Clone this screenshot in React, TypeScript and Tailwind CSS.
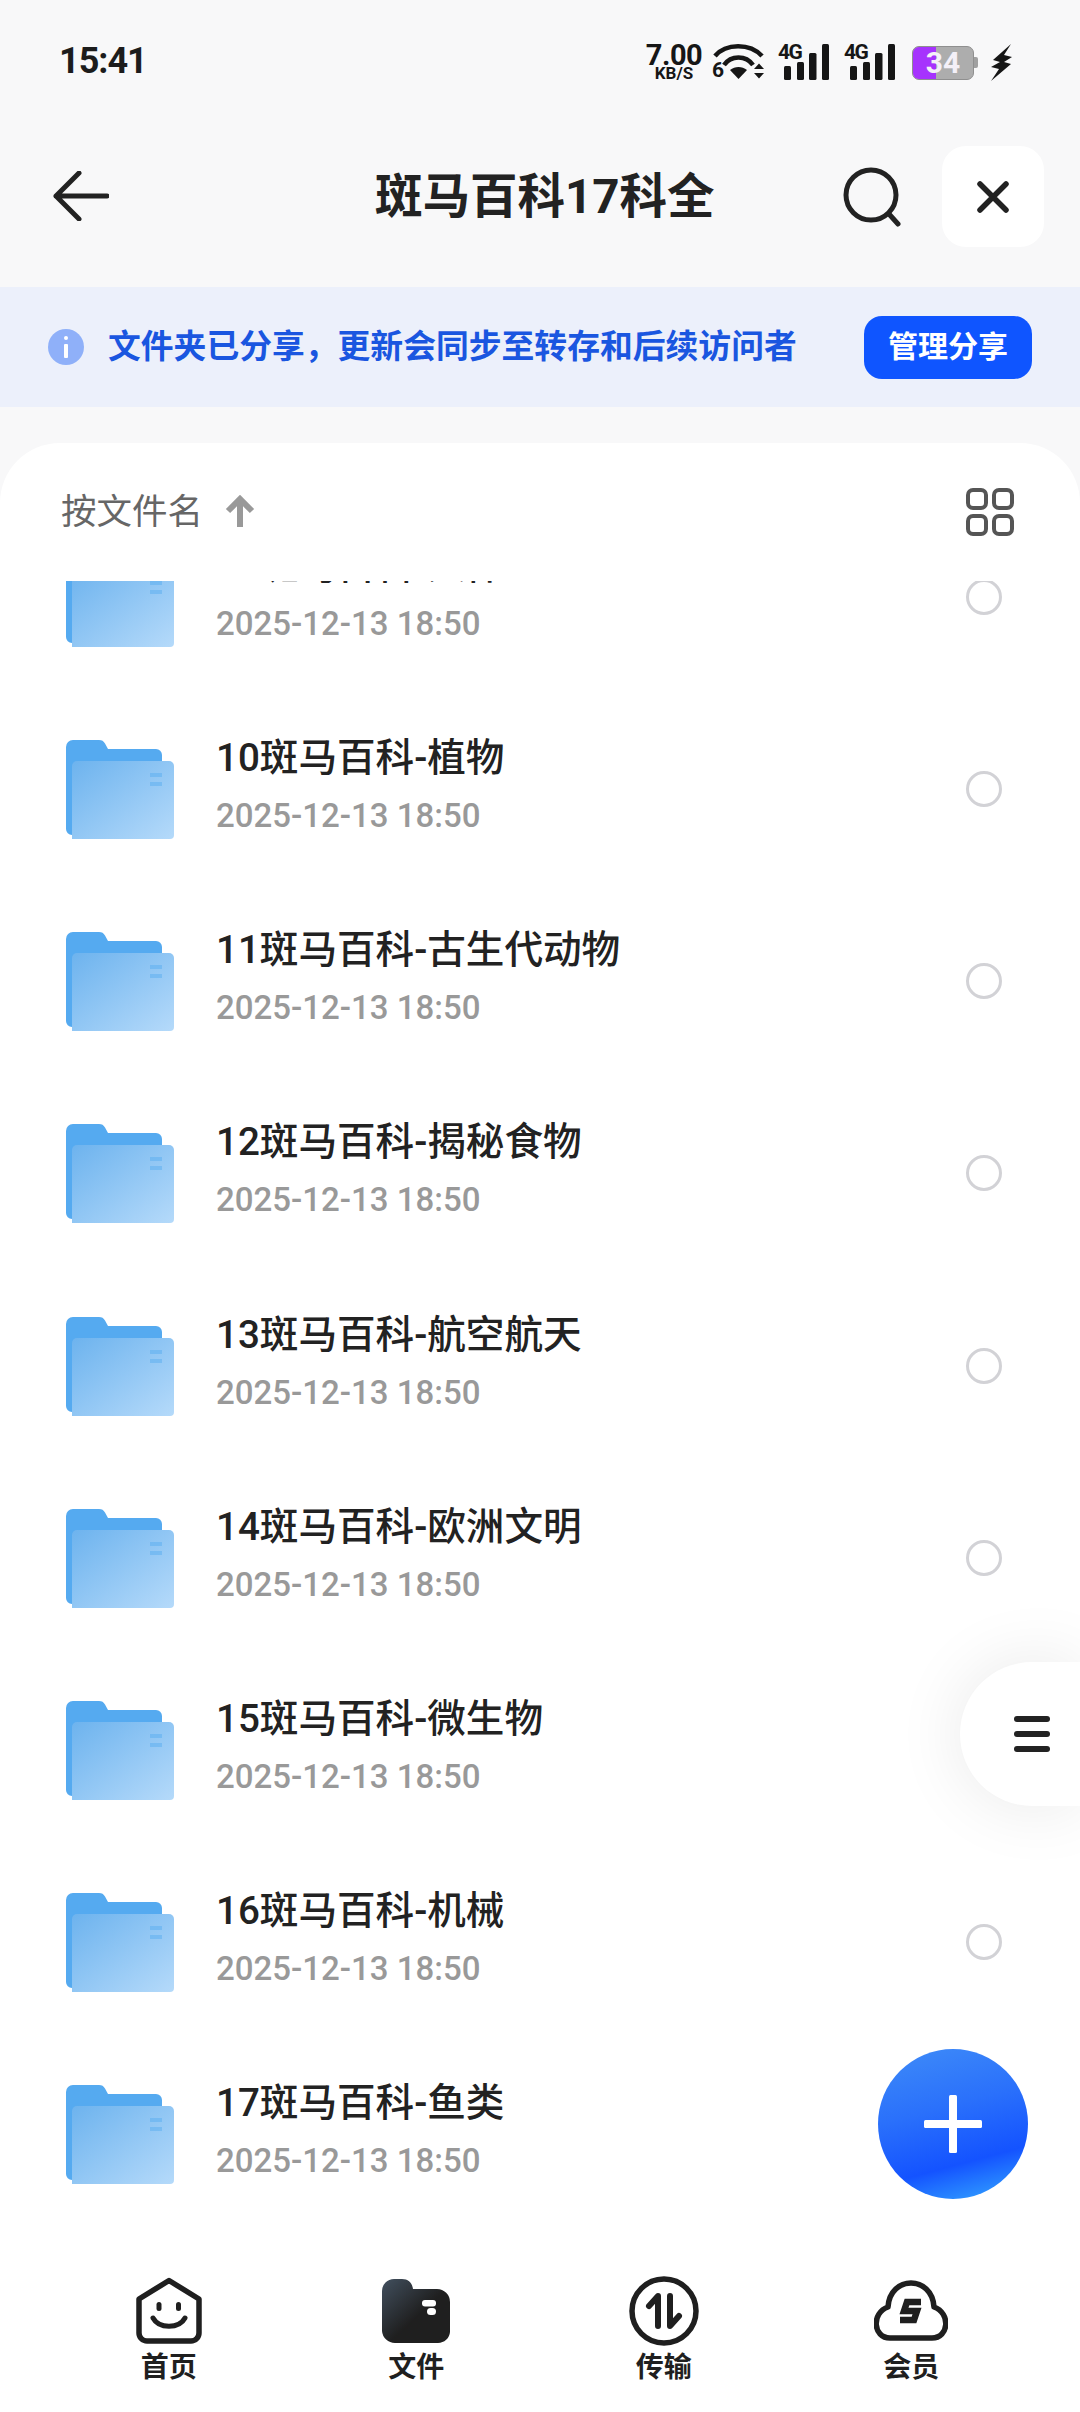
import React from "react";

const names = [
  "09斑马百科-人体",
  "10斑马百科-植物",
  "11斑马百科-古生代动物",
  "12斑马百科-揭秘食物",
  "13斑马百科-航空航天",
  "14斑马百科-欧洲文明",
  "15斑马百科-微生物",
  "16斑马百科-机械",
  "17斑马百科-鱼类",
];

function Folder({ id }: { id: number }) {
  return (
    <svg width="108" height="100" viewBox="0 0 108 100" className="shrink-0">
      <defs>
        <linearGradient id={`f${id}`} x1="0" y1="0" x2="1" y2="1">
          <stop offset="0" stopColor="#6db3ee" />
          <stop offset="1" stopColor="#b5dafa" />
        </linearGradient>
      </defs>
      <path d="M0 7a7 7 0 0 1 7-7h26c3 0 4.500 1 6 3.500L42 9h48a6 6 0 0 1 6 6v80H6a6 6 0 0 1-6-6Z" fill="#55aaf0" />
      <path d="M6 26a5 5 0 0 1 5-5h92a5 5 0 0 1 5 5v69a4 4 0 0 1-4 4H6Z" fill={`url(#f${id})`} />
      <rect x="84" y="33" width="12" height="4" fill="#55aaf0" opacity="0.45" />
      <rect x="84" y="42" width="12" height="4" fill="#55aaf0" opacity="0.45" />
    </svg>
  );
}

function Signal() {
  return (
    <div className="relative w-[52px] h-[36px]">
      <svg width="52" height="36" viewBox="0 0 52 36" className="absolute left-0 top-0">
        <rect x="6" y="22" width="7" height="14" rx="1.500" fill="#161616" />
        <rect x="19" y="18" width="7" height="18" rx="1.500" fill="#161616" />
        <rect x="31" y="9" width="7.500" height="27" rx="1.500" fill="#161616" />
        <rect x="44" y="0" width="7" height="36" rx="1.500" fill="#161616" />
      </svg>
      <span className="absolute left-0 top-[-4px] w-[24px] text-[21px] leading-[24px] font-bold text-[#161616] tracking-[-1.500px] whitespace-nowrap">4G</span>
    </div>
  );
}

function StatusBar() {
  return (
    <div className="h-[146px] shrink-0 pl-[59px] pr-[68px] flex items-start justify-between">
      <span className="mt-[40px] text-[36px] leading-[42px] font-bold text-[#1c1c1c] tracking-[-1px]">15:41</span>
      <div className="mt-[44px] flex items-start">
        <div className="w-[58px] flex flex-col items-center text-[#161616] font-bold">
          <span className="text-[29px] leading-[22px] tracking-[-0.5px]">7.00</span>
          <span className="text-[17px] leading-[14px]">KB/S</span>
        </div>
        <div className="relative w-[52px] h-[37px] ml-[10px]">
          <svg width="52" height="37" viewBox="0 0 52 37" className="absolute left-0 top-0">
            <path d="M2 12C13 -1 37 -1 49 12" stroke="#161616" strokeWidth="4.500" fill="none" />
            <path d="M11 21C18 11 33 11 40 21" stroke="#161616" strokeWidth="4.500" fill="none" />
            <path d="M17 26c5-4 12-4 17 0l-8.500 9Z" fill="#161616" />
            <path d="M41 25h10l-5-5.500ZM41 29h10l-5 5.500Z" fill="#161616" />
          </svg>
          <span className="absolute left-[-1px] top-[14px] text-[21px] leading-[24px] font-bold text-[#161616]">6</span>
        </div>
        <div className="ml-[13px]"><Signal /></div>
        <div className="ml-[14px]"><Signal /></div>
        <div className="relative ml-[16px] mt-[2px] w-[62px] h-[34px] rounded-[7px] bg-[#adadad] border border-[#8f8f8f] overflow-hidden flex items-center justify-center">
          <div className="absolute left-0 top-0 bottom-0 w-[23px] bg-[#a633fd]" />
          <span className="relative text-[30px] leading-[34px] font-bold text-[#f4f0f8]">34</span>
        </div>
        <div className="mt-[13px] w-[4px] h-[11px] rounded-r-[2px] bg-[#a0a0a0]" />
        <svg width="22" height="37" viewBox="0 0 22 37" className="ml-[12px]">
          <path d="M21 0 3 16l7 2-9 5 8 2-8 12 20-17-7-2 8-5-8-2 7-11Z" fill="#161616" />
        </svg>
      </div>
    </div>
  );
}

function Header() {
  return (
    <div className="relative h-[101px] shrink-0 flex items-center justify-between pl-[53px] pr-[36px]">
      <svg width="56" height="50" viewBox="0 0 56 50" className="mt-[-2px]">
        <path d="M26 2 3 25l23 23M3 25h51" stroke="#222" strokeWidth="5" strokeLinecap="round" strokeLinejoin="round" fill="none" />
      </svg>
      <span className="absolute left-[375px] top-[26px] text-[47.500px] leading-[50px] font-bold text-[#222]">斑马百科17科全</span>
      <div className="flex items-center">
        <svg width="60" height="60" viewBox="0 0 60 60" className="mr-[40px]">
          <circle cx="29" cy="28" r="25" stroke="#222" strokeWidth="5" fill="none" />
          <path d="m47 47 9 10" stroke="#222" strokeWidth="5" strokeLinecap="round" />
        </svg>
        <div className="w-[102px] h-[101px] rounded-[24px] bg-white flex items-center justify-center">
          <svg width="34" height="34" viewBox="0 0 34 34">
            <path d="M4 4 30 30M30 4 4 30" stroke="#222" strokeWidth="5.500" strokeLinecap="round" />
          </svg>
        </div>
      </div>
    </div>
  );
}

function Banner() {
  return (
    <div className="mt-[40px] h-[120px] shrink-0 bg-[#ecf0fb] flex items-center pl-[48px] pr-[48px]">
      <div className="w-[36px] h-[36px] rounded-full bg-[#8fb0f9] flex items-center justify-center shrink-0">
        <svg width="6" height="22" viewBox="0 0 6 22">
          <rect x="1" y="0" width="4" height="4" rx="2" fill="#fff" />
          <rect x="1" y="8" width="4" height="14" rx="1" fill="#fff" />
        </svg>
      </div>
      <span className="ml-[24px] text-[32.800px] leading-[40px] font-bold text-[#1a56e0] whitespace-nowrap">文件夹已分享，更新会同步至转存和后续访问者</span>
      <div className="ml-auto w-[168px] h-[63px] rounded-[18px] bg-[#0f55ff] flex items-center justify-center text-[30px] leading-[36px] font-bold text-white">管理分享</div>
    </div>
  );
}

function SortRow() {
  return (
    <div className="h-[138px] shrink-0 pl-[61px] pr-[66px] flex items-center justify-between">
      <div className="flex items-center">
        <span className="text-[35.500px] leading-[42px] text-[#666]">按文件名</span>
        <svg width="32" height="34" viewBox="0 0 32 34" className="ml-[21px]">
          <path d="M16 32V5M4 16 16 4l12 12" stroke="#999" strokeWidth="6" fill="none" />
        </svg>
      </div>
      <svg width="48" height="48" viewBox="0 0 48 48">
        <g stroke="#555" strokeWidth="4" fill="none">
          <rect x="2" y="2" width="18" height="18" rx="5" />
          <rect x="28" y="2" width="18" height="18" rx="5" />
          <rect x="2" y="28" width="18" height="18" rx="5" />
          <rect x="28" y="28" width="18" height="18" rx="5" />
        </g>
      </svg>
    </div>
  );
}

function Row({ name, i, last }: { name: string; i: number; last: boolean }) {
  return (
    <div className="h-[192.140px] shrink-0 pl-[66px] pr-[78px] flex items-center">
      <Folder id={i} />
      <div className="ml-[42px] flex flex-col mt-[-9px]">
        <span className="text-[38.600px] leading-[46px] text-[#222] font-medium whitespace-nowrap">{name}</span>
        <span className="mt-[15px] text-[33px] leading-[40px] font-medium text-[#999]">2025-12-13 18:50</span>
      </div>
      {!last && <div className="ml-auto mt-[-2px] w-[36px] h-[36px] rounded-full border-[3px] border-[#d2d2d6]" />}
    </div>
  );
}

function HomeIcon() {
  return (
    <svg width="68" height="68" viewBox="0 0 68 68">
      <path d="M34 3.500 64 22v34a8 8 0 0 1-8 8H12a8 8 0 0 1-8-8V22Z" fill="none" stroke="#1f1f1f" strokeWidth="5.500" strokeLinejoin="round" />
      <rect x="21.500" y="25" width="5" height="9" rx="2.500" fill="#1f1f1f" />
      <rect x="41" y="25" width="5" height="9" rx="2.500" fill="#1f1f1f" />
      <path d="M18 41c6 11 26 11 32 0" fill="none" stroke="#1f1f1f" strokeWidth="5" strokeLinecap="round" />
    </svg>
  );
}

function FilesIcon() {
  return (
    <svg width="68" height="68" viewBox="0 0 68 68">
      <defs>
        <linearGradient id="fileg" x1="0" y1="0" x2="1" y2="1">
          <stop offset="0" stopColor="#42505f" />
          <stop offset="0.55" stopColor="#1f1f1f" />
          <stop offset="1" stopColor="#1f1f1f" />
        </linearGradient>
      </defs>
      <path d="M0 14A12 12 0 0 1 12 2h8c6 0 10 3 11 10h24a13 13 0 0 1 13 13v30a12 12 0 0 1-12 11H13A13 13 0 0 1 0 54Z" fill="url(#fileg)" />
      <rect x="40" y="23" width="14" height="6.500" rx="3" fill="#fff" />
      <rect x="45" y="31" width="9" height="7" rx="3.500" fill="#fff" />
    </svg>
  );
}

function TransferIcon() {
  return (
    <svg width="70" height="70" viewBox="0 0 70 70">
      <circle cx="35" cy="35" r="32" fill="none" stroke="#1f1f1f" strokeWidth="5.500" />
      <path d="M29 50V20L20 30" fill="none" stroke="#1f1f1f" strokeWidth="6" strokeLinecap="round" strokeLinejoin="round" />
      <path d="M41 20v30l9-10" fill="none" stroke="#1f1f1f" strokeWidth="6" strokeLinecap="round" strokeLinejoin="round" />
    </svg>
  );
}

function MemberIcon() {
  return (
    <svg width="74" height="62" viewBox="0 0 74 62">
      <path d="M16 58h42c17 0 19-25 2-31C59 11 48 3 37 3S15 11 14 27C-3 33 -1 58 16 58Z" fill="none" stroke="#1f1f1f" strokeWidth="5.500" strokeLinejoin="round" />
      <path d="M47 22H33l-3 9h13l-3 9H26" fill="none" stroke="#1f1f1f" strokeWidth="6.500" strokeLinejoin="miter" />
    </svg>
  );
}

function BottomNav() {
  const items = [
    { label: "首页", icon: <HomeIcon /> },
    { label: "文件", icon: <FilesIcon /> },
    { label: "传输", icon: <TransferIcon /> },
    { label: "会员", icon: <MemberIcon /> },
  ];
  return (
    <div className="h-[181px] shrink-0 bg-white px-[45px] pt-[45px] grid grid-cols-4">
      {items.map((it) => (
        <div key={it.label} className="flex flex-col items-center">
          <div className="h-[70px] flex items-center justify-center">{it.icon}</div>
          <span className="mt-[4px] text-[28px] leading-[36px] font-bold text-[#1f1f1f]">{it.label}</span>
        </div>
      ))}
    </div>
  );
}

export default function App() {
  return (
    <div className="relative w-[1080px] h-[2412px] overflow-hidden bg-[#f8f8f9] flex flex-col font-['Roboto','Noto_Sans_CJK_SC',sans-serif]">
      <StatusBar />
      <Header />
      <Banner />
      <div className="mt-[36px] flex-1 min-h-0 bg-white rounded-t-[60px] flex flex-col">
        <SortRow />
        <div className="flex-1 min-h-0 overflow-hidden flex flex-col">
          <div className="mt-[-79px] flex flex-col">
            {names.map((n, i) => (
              <Row key={n} name={n} i={i} last={i === names.length - 1} />
            ))}
          </div>
        </div>
        <BottomNav />
      </div>

      <div className="absolute right-0 top-[1662px] w-[120px] h-[144px] rounded-l-[72px] bg-white shadow-[0_0_70px_rgba(0,0,0,0.09)] flex items-center pl-[54px]">
        <div className="flex flex-col gap-[9px]">
          <div className="w-[36px] h-[6px] rounded-full bg-[#222]" />
          <div className="w-[36px] h-[6px] rounded-full bg-[#222]" />
          <div className="w-[36px] h-[6px] rounded-full bg-[#222]" />
        </div>
      </div>

      <div className="absolute left-[878px] top-[2049px] w-[150px] h-[150px] rounded-full bg-[linear-gradient(165deg,#3f8cf8_0%,#2a70fb_40%,#1453ff_72%,#2a8cff_90%,#5fdcff_100%)] flex items-center justify-center">
        <svg width="58" height="58" viewBox="0 0 58 58">
          <rect x="0" y="25" width="58" height="8" rx="1.500" fill="#fff" />
          <rect x="25" y="0" width="8" height="58" rx="1.500" fill="#fff" />
        </svg>
      </div>
    </div>
  );
}
